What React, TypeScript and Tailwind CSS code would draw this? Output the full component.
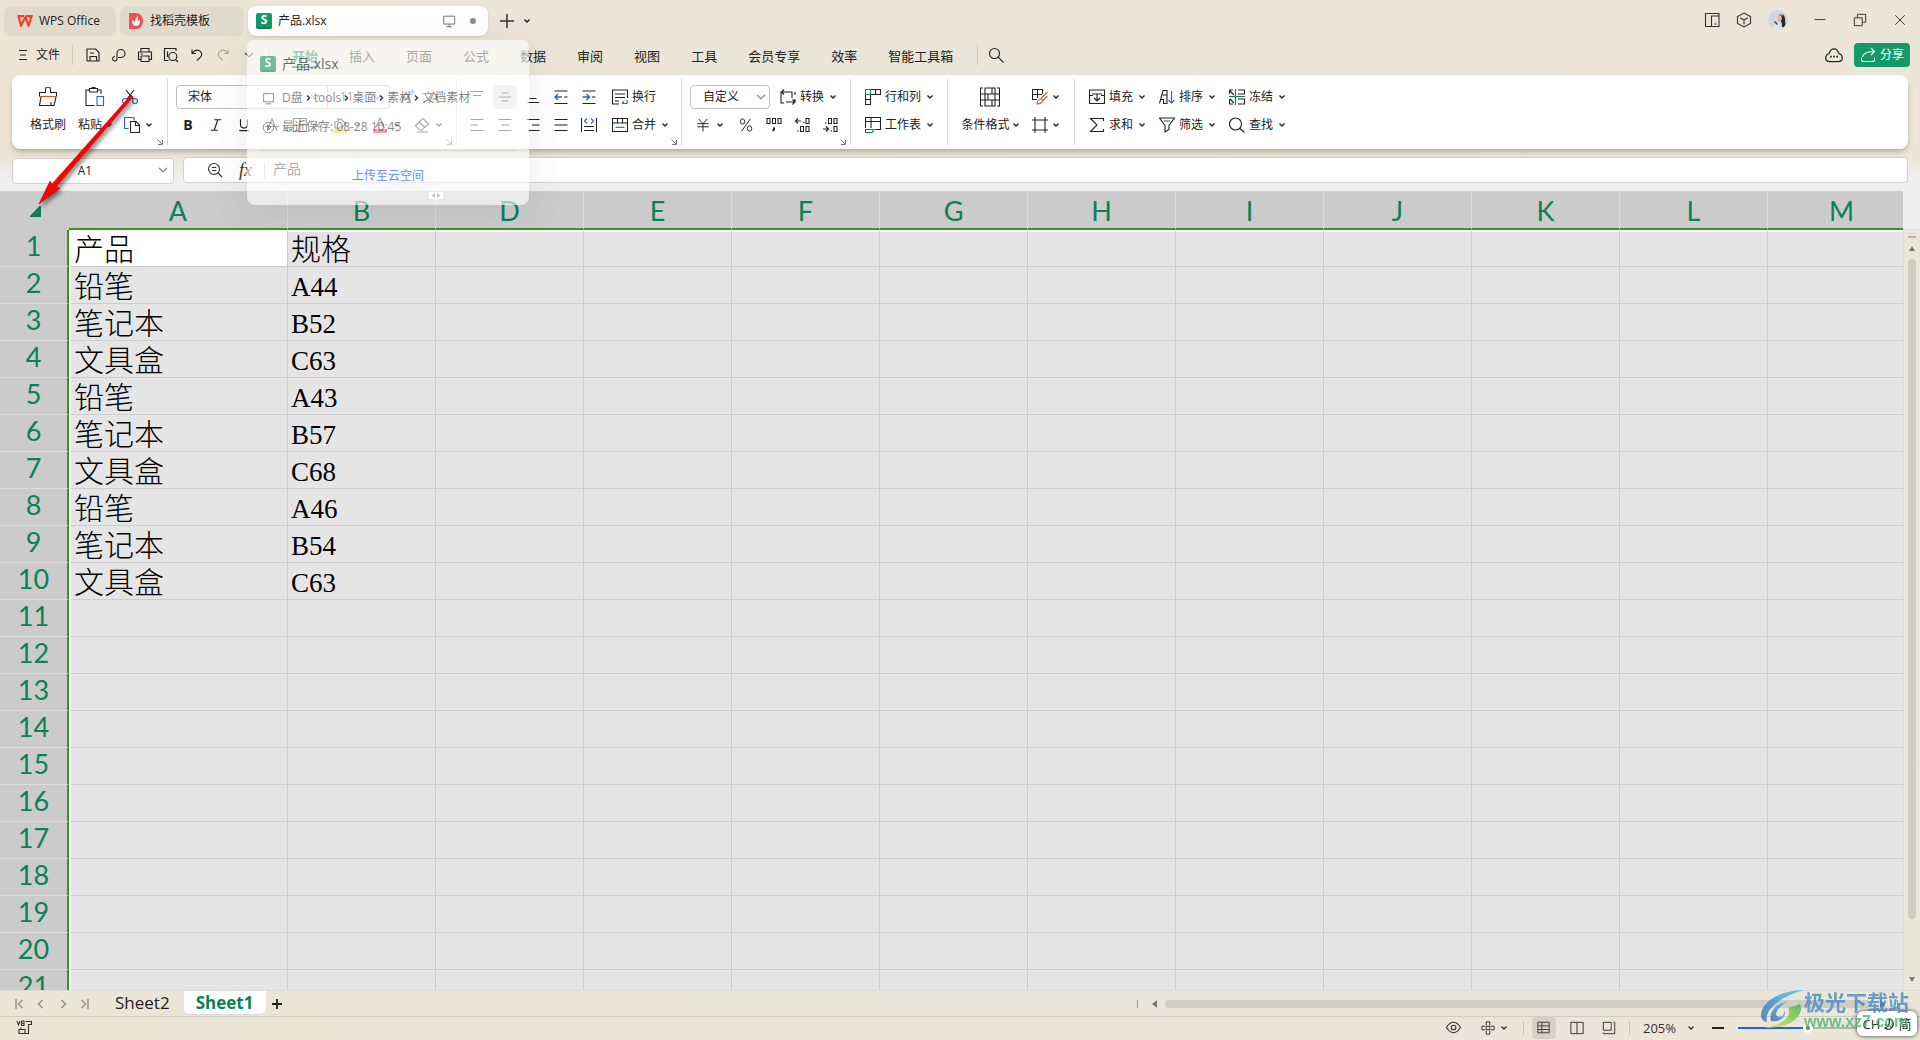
import React from 'react';
import clsx from 'clsx';

type IconProps = {
  children: React.ReactNode;
  className?: string;
};

const GREEN = '#0a8157';
const BLUE = '#2b5fe0';
const ORANGE = '#cf5c2a';

const Icon = ({ children, className = 'w-4 h-4' }: IconProps) => (
  <svg viewBox="0 0 16 16" fill="none" stroke="currentColor" strokeWidth="1.1" className={clsx('shrink-0', className)} aria-hidden="true">
    {children}
  </svg>
);

const Caret = ({ className = '' }: { className?: string }) => (
  <svg viewBox="0 0 6 4" fill="none" stroke="currentColor" strokeWidth="1.4" className={clsx('w-[6px] h-1 shrink-0', className)} aria-hidden="true">
    <path d="M0.5 0.5L3 3L5.500 0.500" />
  </svg>
);

const WideCaret = ({ className = '' }: { className?: string }) => (
  <svg viewBox="0 0 10 6" fill="none" stroke="currentColor" strokeWidth="1.1" className={clsx('w-[10px] h-[6px] shrink-0', className)} aria-hidden="true">
    <path d="M1 0.800L5 4.800L9 0.800" />
  </svg>
);

const SheetLogo = () => (
  <span className="w-4 h-4 rounded-xs bg-[#14996a] border-b-2 border-[#0c7d55] text-white text-xs leading-4 font-bold flex items-center justify-center shrink-0">
    S
  </span>
);

const Launcher = () => (
  <svg viewBox="0 0 6 6" fill="none" stroke="#777" className="absolute right-1 bottom-1 w-[6px] h-[6px]" aria-hidden="true">
    <path d="M0.500 0.500L5 5M5.500 1V5.500H1" />
  </svg>
);

const ToolButton = ({ label, children }: { label: string; children: React.ReactNode }) => (
  <button aria-label={label} className="w-7 h-7 flex items-center justify-center">
    {children}
  </button>
);

const LabelButton = ({ text, caret = true, children }: { text: string; caret?: boolean; children: React.ReactNode }) => (
  <button className="h-7 flex items-center gap-1 whitespace-nowrap">
    {children}
    {text}
    {caret && <Caret className="ml-[2px]" />}
  </button>
);

const Group = ({ width, launcher = false, children }: { width: string; launcher?: boolean; children: React.ReactNode }) => (
  <div className={clsx('relative pt-1 shrink-0', width)}>
    {children}
    {launcher && <Launcher />}
  </div>
);

const quickTools = [
  { label: '保存', icon: <path d="M2 14V2H10.500L14 5.500V14H2M5 14V9.500H11.500V14M5 6H9" /> },
  { label: '链接', icon: <path d="M7 10.500H10A4 4 0 1 0 6 6.500V11.500A2.200 2.200 0 1 1 3.800 9.500" /> },
  { label: '打印', icon: <path d="M4 5V1.500H12V5M4 12.500H1.500V5H14.500V12.500H12M4 9H12V14.500H4V9M3.500 7H5.500" /> },
  { label: '打印预览', icon: <path d="M5.500 13.500H1.500V1.500H13V4M4.500 4.500V10M12.500 12.500L15 15M13.800 9.500A4 4 0 1 1 5.800 9.500A4 4 0 1 1 13.800 9.500" /> },
  { label: '撤销', icon: <path d="M3 2.500V6.500H7M3.300 6.300C5 3.500 8 2.500 10.500 3.800C13 5.200 13.300 8.300 11.500 10.200L8 13.500" /> },
];

const menus = ['开始', '插入', '页面', '公式', '数据', '审阅', '视图', '工具', '会员专享', '效率', '智能工具箱'];

const columns = ['A', 'B', 'D', 'E', 'F', 'G', 'H', 'I', 'J', 'K', 'L', 'M'];

const rows = [
  ['产品', '规格'],
  ['铅笔', 'A44'],
  ['笔记本', 'B52'],
  ['文具盒', 'C63'],
  ['铅笔', 'A43'],
  ['笔记本', 'B57'],
  ['文具盒', 'C68'],
  ['铅笔', 'A46'],
  ['笔记本', 'B54'],
  ['文具盒', 'C63'],
];

const TabBar = () => (
  <div className="h-10 flex items-center text-xs shrink-0">
    <div className="mt-[2px] flex items-center">
      <button className="ml-1 w-28 h-[30px] rounded-lg bg-[#e0dacd] flex items-center gap-[6px] pl-[13px]">
        <svg viewBox="0 0 16 12" className="w-4 h-3" fill="none" stroke="#f0402c" strokeWidth="2.200" aria-hidden="true">
          <path d="M0.500 1.200H7M1.500 1L4 10.500L8.500 2L11.500 10.500L14.500 1.200M9.500 1.200H15.800" />
        </svg>
        WPS Office
      </button>
      <button className="ml-1 w-31 h-[30px] rounded-lg bg-[#e0dacd] flex items-center gap-[7px] pl-[9px]">
        <svg viewBox="0 0 14 16" className="w-[14px] h-4" aria-hidden="true">
          <path d="M0 0H7A7 8 0 0 1 7 16H0Z" fill="#ee5058" />
          <path d="M7 13C3 12 3 9 3.500 7C4.500 7.500 5.500 8.500 6 9.500C6 7 7 4.500 8.500 3C9 5 8.800 7 8.500 9C9 8 10 7 11 6.500C11.500 10 10 12.500 7 13Z" fill="#fff" />
        </svg>
        找稻壳模板
      </button>
      <div className="ml-1 w-60 h-[30px] rounded-lg bg-white shadow-sm flex items-center pl-2 pr-3">
        <SheetLogo />
        <span className="ml-[6px] flex-1">产品.xlsx</span>
        <Icon className="w-[14px] h-[14px] text-gray-500 mr-[14px]">
          <path d="M2 2.500H14.500V11.500H2ZM5 14.500H11.500M8.200 11.500V14.500" />
        </Icon>
        <span className="w-[6px] h-[6px] rounded-full bg-[#8d8d8d]" />
      </div>
      <button aria-label="新建" className="ml-3">
        <svg viewBox="0 0 14 14" className="w-[14px] h-[14px]" stroke="#333" strokeWidth="1.500" aria-hidden="true">
          <path d="M7 0V14M0 7H14" />
        </svg>
      </button>
      <button aria-label="标签列表" className="ml-[10px]">
        <Caret />
      </button>
    </div>
    <div className="ml-auto flex items-center text-[#333]">
      <button aria-label="分屏" className="w-8 flex justify-center">
        <Icon>
          <path d="M15 4V1.500H1.500V14.500H5.500M15 4H7.500V14.500H15ZM7.500 14.500H5.500M10.500 12H12.500" />
        </Icon>
      </button>
      <button aria-label="应用" className="w-8 flex justify-center">
        <Icon>
          <path d="M8 1L14.500 4.500V11.500L8 15L1.500 11.500V4.500ZM4 5.800L8 8L12 5.800M8 8V12.500" />
        </Icon>
      </button>
      <button aria-label="账号" className="w-9 flex justify-center">
        <svg viewBox="0 0 20 20" className="w-5 h-5" aria-hidden="true">
          <circle cx="10" cy="10" r="10" fill="#cbd8e2" />
          <path d="M5 19C5 14 8 12 11 12L14 19C11 20.500 8 20.500 5 19Z" fill="#dbe8f0" />
          <path d="M11 5C14 3 17 5 17 9C17 13 18.500 14 16 17L14 17C14 13 13.500 11 11.500 9Z" fill="#2d2730" />
          <path d="M10 6C12 4.500 14 6 14 8C13.500 10.500 12 12 10.500 12C9 10.500 9 8 10 6Z" fill="#e3b9a8" />
          <path d="M7 11L10 14L9 15L6 12Z" fill="#4b3d3f" />
          <path d="M11 5L15 4L14 6Z" fill="#dfae4c" />
        </svg>
      </button>
      <button aria-label="最小化" className="w-10 ml-1 flex justify-center">
        <Icon className="w-[14px] h-[14px]">
          <path d="M2 7.500H14" />
        </Icon>
      </button>
      <button aria-label="还原" className="w-10 flex justify-center">
        <Icon className="w-[14px] h-[14px]">
          <path d="M1.500 5.500H10.500V14.500H1.500ZM5 5.500V1.500H14.500V10.500H10.500" />
        </Icon>
      </button>
      <button aria-label="关闭" className="w-10 flex justify-center">
        <Icon className="w-[14px] h-[14px]">
          <path d="M2.500 2.500L13.500 13.500M13.500 2.500L2.500 13.500" />
        </Icon>
      </button>
    </div>
  </div>
);

const MenuBar = () => (
  <nav className="h-[30px] flex items-center text-xs shrink-0 text-[#222]">
    <button className="ml-[18px] flex items-center gap-2">
      <svg viewBox="0 0 10 12" className="w-[10px] h-3" stroke="currentColor" aria-hidden="true">
        <path d="M1 1.500H9M2 6H8M1 10.500H9" />
      </svg>
      文件
    </button>
    <span className="ml-3 mr-[7px] w-px h-5 bg-[#ccc6b8]" />
    {quickTools.map((tool) => (
      <button key={tool.label} aria-label={tool.label} className="w-[26px] flex justify-center">
        <Icon>{tool.icon}</Icon>
      </button>
    ))}
    <button aria-label="恢复" className="w-[26px] flex justify-center text-[#aaa59b]">
      <Icon>
        <path d="M13 2.500V6.500H9M12.700 6.300C11 3.500 8 2.500 5.500 3.800C3 5.200 2.700 8.300 4.500 10.200L8 13.500" />
      </Icon>
    </button>
    <button aria-label="更多" className="w-[26px] flex justify-center">
      <WideCaret />
    </button>
    <span className="ml-[7px] mr-[22px] w-px h-5 bg-[#ccc6b8]" />
    <div className="flex gap-[31px] text-[13px] leading-5">
      {menus.map((menu, i) => (
        <button key={menu} className={clsx('whitespace-nowrap pt-1 border-b-2', i === 0 ? 'font-bold text-[#0a8157] border-[#0a8157]' : 'border-transparent')}>
          {menu}
        </button>
      ))}
    </div>
    <span className="ml-6 mr-[10px] w-px h-5 bg-[#ccc6b8]" />
    <button aria-label="搜索">
      <Icon>
        <path d="M11.500 6.500A5 5 0 1 1 1.500 6.500A5 5 0 1 1 11.500 6.500M10.200 10.200L15.500 15.500" />
      </Icon>
    </button>
    <button aria-label="云文档" className="ml-auto mr-[11px]">
      <Icon className="w-[18px] h-[18px]">
        <path d="M4 13.800C0.800 13.800 0.500 11.800 0.700 9.800C1 8 2 7.200 3.500 6.800C4.500 4 6 2.500 8 2.500S11.500 4 12.500 6.800C14 7.200 15 8 15.300 9.800C15.500 11.800 15.200 13.800 12 13.800Z" />
        <path d="M4.500 9.500H6M7.300 9.500H8.800M10.100 9.500H11.600" strokeWidth="1.600" />
      </Icon>
    </button>
    <button className="mr-[10px] w-14 h-6 rounded bg-[#14996a] text-white flex items-center justify-center gap-1">
      <Icon>
        <path d="M1.500 10.500V12.500Q1.500 14.500 3.500 14.500H12.500Q14.500 14.500 14.500 12.500V10.500M2.500 10C3.500 6 7 4.500 14 4.500M11 1L14.500 4.500L11 8" />
      </Icon>
      分享
    </button>
  </nav>
);

const Divider = () => <span className="w-px my-1 bg-[#d6d6d6] shrink-0" />;

const Ribbon = () => (
  <div className="mx-3 mt-[5px] h-[74px] rounded-lg bg-white shadow-md shadow-[#00000030] flex text-xs shrink-0 text-[#222]">
    <Group width="w-[155px]" launcher>
      <div className="flex pt-1">
        <button className="ml-[18px] w-9 h-14 flex flex-col items-center">
          <svg viewBox="0 0 20 20" className="w-5 h-5 mt-1" fill="none" stroke="currentColor" strokeWidth="1.100" aria-hidden="true">
            <path d="M1.500 9.500V5.500H7.500V2.500A2 2 0 0 1 12.500 2.500V5.500H18.500V9.500M3 10L1.500 18.500H16L18 10M13 18V15" />
            <path d="M1.500 9.500H18.500" stroke={ORANGE} />
          </svg>
          <span className="mt-2 leading-5">格式刷</span>
        </button>
        <button className="ml-3 w-[34px] h-14 flex flex-col items-center">
          <svg viewBox="0 0 20 20" className="w-5 h-5 mt-1" fill="none" stroke="currentColor" strokeWidth="1.100" aria-hidden="true">
            <path d="M9.500 18.500H1V3H4M13 3H16V7M4.500 1.500H12.500V5H4.500ZM7 1.500V0.500H10V1.500" />
            <path d="M12 9.500H18.500V18.500H12Z" stroke={BLUE} />
          </svg>
          <span className="mt-2 leading-5 flex items-center gap-1">
            粘贴
            <Caret />
          </span>
        </button>
        <div className="ml-1">
          <ToolButton label="剪切">
            <Icon>
              <path d="M4 1L11 10M12 1L5 10" />
              <circle cx="3" cy="12" r="2.500" stroke={BLUE} />
              <circle cx="13" cy="12" r="2.500" stroke={BLUE} />
            </Icon>
          </ToolButton>
          <button aria-label="复制" className="h-7 flex items-center gap-[6px] pl-2">
            <Icon>
              <path d="M4.500 11.500H0.500V0.500H10V3.500" stroke={BLUE} />
              <path d="M6.500 4.500H12L15.500 8V15.500H6.500ZM11.500 4.500V8.500H15.500" />
            </Icon>
            <Caret />
          </button>
        </div>
      </div>
    </Group>
    <Divider />
    <Group width="w-[288px]" launcher>
      <div className="h-7 mt-1 ml-2 flex items-center">
        <div className="relative">
          <select aria-label="字体" className="appearance-none w-[152px] h-6 pl-[11px] border border-[#bfbfbf] rounded-l">
            <option>宋体</option>
          </select>
          <WideCaret className="absolute right-2 top-[9px] text-gray-500" />
        </div>
        <div className="relative">
          <select aria-label="字号" className="appearance-none w-[62px] h-6 pl-3 border border-l-0 border-[#bfbfbf] rounded-r">
            <option>11</option>
          </select>
          <WideCaret className="absolute right-2 top-[9px] text-gray-500" />
        </div>
        <span className="w-1" />
        <ToolButton label="增大字号">
          <Icon>
            <path d="M1 14L6 3L11 14M3 10H9" />
            <path d="M10 3H15M12.500 0.500V5.500" stroke={BLUE} />
          </Icon>
        </ToolButton>
        <ToolButton label="减小字号">
          <Icon>
            <path d="M1 14L6 3L11 14M3 10H9" />
            <path d="M10 3H15" stroke={BLUE} />
          </Icon>
        </ToolButton>
      </div>
      <div className="h-7 ml-[6px] flex items-center">
        <ToolButton label="加粗">
          <span className="font-bold text-sm">B</span>
        </ToolButton>
        <ToolButton label="倾斜">
          <Icon className="w-[14px] h-[14px]">
            <path d="M6 2H14M2 14H10M10 2L6 14" strokeWidth="1.300" />
          </Icon>
        </ToolButton>
        <ToolButton label="下划线">
          <Icon className="w-[14px] h-[14px]">
            <path d="M4 1.500V7.500A4 4 0 0 0 12 7.500V1.500M2.500 14.500H13.500" strokeWidth="1.300" />
          </Icon>
        </ToolButton>
        <ToolButton label="删除线">
          <Icon>
            <path d="M3 14L8 2L13 14M1 9.500H15" />
          </Icon>
        </ToolButton>
        <button aria-label="边框" className="w-10 h-7 pl-[6px] flex items-center gap-[6px]">
          <Icon>
            <path d="M1.500 1.500H14.500V14.500H1.500ZM8 1.500V14.500M1.500 8H14.500" />
          </Icon>
          <Caret />
        </button>
        <button aria-label="填充颜色" className="w-10 h-7 pl-[6px] flex items-center gap-[6px]">
          <Icon>
            <path d="M3 5L9 2L14 7L8 11H3ZM6 1V5" />
            <path d="M1 14H15" stroke="#e6e000" strokeWidth="4" />
          </Icon>
          <Caret />
        </button>
        <button aria-label="字体颜色" className="w-10 h-7 pl-[6px] flex items-center gap-[6px]">
          <Icon>
            <path d="M3.500 11L8 1L12.500 11M5 8H11" />
            <path d="M1 14H15" stroke="#e81123" strokeWidth="4" />
          </Icon>
          <Caret />
        </button>
        <button aria-label="清除" className="w-10 h-7 pl-2 flex items-center gap-[6px]">
          <Icon>
            <path d="M1.500 8.500L9 1.500L14.500 7L8 13H5.500ZM5 5L11 10.500M3 15H14" />
          </Icon>
          <Caret />
        </button>
      </div>
    </Group>
    <Divider />
    <Group width="w-[224px]" launcher>
      <div className="h-7 mt-1 ml-[6px] flex items-center">
        <ToolButton label="顶端对齐">
          <Icon>
            <path d="M1.500 2.500H14.500M4 6.500H12" />
          </Icon>
        </ToolButton>
        <button aria-label="垂直居中" className="w-6 h-6 mx-[2px] rounded bg-[#e2e2e2] flex items-center justify-center">
          <Icon className="w-[14px] h-[14px]">
            <path d="M4 3.500H12M1 8H15M4 12.500H12" />
          </Icon>
        </button>
        <ToolButton label="底端对齐">
          <Icon>
            <path d="M4.500 9.500H11.500M2.500 13.500H14" />
          </Icon>
        </ToolButton>
        <ToolButton label="减少缩进">
          <Icon>
            <path d="M1.500 2H14.500M1.500 14.500H14.500M11 8H14.500" />
            <path d="M9 8H2M5 5L2 8L5 11" stroke={BLUE} strokeWidth="1.400" />
          </Icon>
        </ToolButton>
        <ToolButton label="增加缩进">
          <Icon>
            <path d="M1.500 2H14.500M1.500 14.500H14.500M11 8H14.500" />
            <path d="M1.500 8H8.500M5.500 5L8.500 8L5.500 11" stroke={BLUE} strokeWidth="1.400" />
          </Icon>
        </ToolButton>
        <span className="w-[9px]" />
        <LabelButton text="换行" caret={false}>
          <Icon>
            <path d="M7 15H0.500V1H15.500V9M3 5H13M3 8.500H13M3 12H7" />
            <path d="M15 11V14.500H10M12 12.500L10 14.500" stroke={GREEN} />
          </Icon>
        </LabelButton>
      </div>
      <div className="h-7 ml-[6px] flex items-center">
        <ToolButton label="左对齐">
          <Icon>
            <path d="M1.500 2.500H14.500M1.500 8H9M1.500 13.500H14.500" />
          </Icon>
        </ToolButton>
        <ToolButton label="居中">
          <Icon>
            <path d="M1.500 2.500H14.500M4 8H12M1.500 13.500H14.500" />
          </Icon>
        </ToolButton>
        <ToolButton label="右对齐">
          <Icon>
            <path d="M1.500 2.500H14.500M7 8H14.500M3.500 13.500H14.500" />
          </Icon>
        </ToolButton>
        <ToolButton label="两端对齐">
          <Icon>
            <path d="M1.500 2.500H14.500M1.500 8H14.500M1.500 13.500H14.500" />
          </Icon>
        </ToolButton>
        <ToolButton label="分散对齐">
          <Icon>
            <path d="M0.500 1V15M15.500 1V15M3 9.500H13M3 13.500H13" />
            <path d="M6 1.500L3.500 4L6 6.500M10 1.500L12.500 4L10 6.500" stroke={BLUE} />
          </Icon>
        </ToolButton>
        <span className="w-[9px]" />
        <LabelButton text="合并">
          <Icon>
            <path d="M0.500 1.500H15.500V14.500H0.500ZM0.500 6H15.500M5.500 1.500V6M10.500 1.500V6" />
            <path d="M3.500 10.300H12.500" stroke={GREEN} />
          </Icon>
        </LabelButton>
      </div>
    </Group>
    <Divider />
    <Group width="w-[168px]" launcher>
      <div className="h-7 mt-1 ml-2 flex items-center">
        <div className="relative mr-[10px]">
          <select aria-label="数字格式" className="appearance-none w-20 h-6 pl-3 border border-[#bfbfbf] rounded">
            <option>自定义</option>
          </select>
          <WideCaret className="absolute right-1 top-[9px] text-gray-500" />
        </div>
        <LabelButton text="转换">
          <Icon>
            <path d="M4 14H1V3H12V9M4 0.500L1.500 3L4 5.500M15 3V6M15 10V13H6M12.500 10.500L15 13L12.500 15.500" />
          </Icon>
        </LabelButton>
      </div>
      <div className="h-7 ml-2 flex items-center">
        <button aria-label="货币" className="w-[42px] h-7 flex items-center gap-[7px] pl-[6px]">
          <Icon className="w-[14px] h-[14px]">
            <path d="M3 1L8 6.500L13 1M1.500 6.500H14.500M1.500 10H14.500M8 6.500V15.500" />
          </Icon>
          <Caret />
        </button>
        <ToolButton label="百分比">
          <Icon className="w-[14px] h-[14px]">
            <path d="M13 1L3 15" />
            <ellipse cx="4" cy="4" rx="2.500" ry="3" />
            <ellipse cx="12" cy="12" rx="2.500" ry="3" />
          </Icon>
        </ToolButton>
        <ToolButton label="千位分隔">
          <Icon>
            <path d="M1 1.500H4V6.500H1ZM6.500 1.500H9.500V6.500H6.500ZM12 1.500H15V6.500H12Z" />
            <path d="M8 10.500V12L7 14" strokeWidth="2" />
          </Icon>
        </ToolButton>
        <ToolButton label="增加小数">
          <Icon>
            <path d="M7 4H1.500M4 1.500L1.500 4L4 6.500M12 1.500H15V6.500H12ZM6.500 9.500H9.500V14.500H6.500ZM12 9.500H15V14.500H12Z" />
            <path d="M9 5.500H10.500M3 14H4.500" />
          </Icon>
        </ToolButton>
        <ToolButton label="减少小数">
          <Icon>
            <path d="M1 12H6.500M4 9.500L6.500 12L4 14.500M6.500 1.500H9.500V6.500H6.500ZM12 1.500H15V6.500H12ZM12 9.500H15V14.500H12Z" />
            <path d="M3 6H4.500M8.500 14H10" />
          </Icon>
        </ToolButton>
      </div>
    </Group>
    <Divider />
    <Group width="w-24">
      <div className="mt-1 ml-[14px]">
        <LabelButton text="行和列">
          <Icon>
            <path d="M0.500 6V15.500H5.500V6M0.500 10.500H5.500M6 0.500H15.500V5.500H6M10.500 0.500V5.500" />
            <path d="M0.500 0.500H5.500V5.500H0.500Z" stroke={GREEN} />
          </Icon>
        </LabelButton>
        <LabelButton text="工作表">
          <Icon>
            <path d="M0.500 11V0.500H15.500V12.500H10M0.500 4.500H15.500M6 0.500V11" />
            <path d="M0.500 12.500H9L7 15.500H0.500Z" stroke={GREEN} />
          </Icon>
        </LabelButton>
      </div>
    </Group>
    <Divider />
    <Group width="w-[126px]">
      <div className="flex pt-1">
        <button className="ml-[13px] w-[58px] h-14 flex flex-col items-center whitespace-nowrap">
          <svg viewBox="0 0 20 20" className="w-5 h-5 mt-1" fill="none" stroke="currentColor" strokeWidth="1.100" aria-hidden="true">
            <path d="M3 1H0.500V19H3M17 1H19.500V19H17M5 1H15V19H5ZM5 7H19M0.500 7H5M0.500 13H19M8 7V13M12 1V7M12 13V19" />
          </svg>
          <span className="mt-2 leading-5 flex items-center gap-[3px]">
            条件格式
            <Caret />
          </span>
        </button>
        <div className="ml-[13px]">
          <button aria-label="表格样式" className="h-7 flex items-center gap-[5px]">
            <Icon>
              <path d="M5 10.500H0.500V0.500H10.500V5M0.500 5.500H10M5.500 0.500V9" />
              <path d="M15.500 3L9 9.500M15.500 7L11 11.500M5 15C5 11 8 9 10 10.500C12 12.500 9 15 5 15Z" stroke={ORANGE} />
            </Icon>
            <Caret />
          </button>
          <button aria-label="单元格样式" className="h-7 flex items-center gap-[5px]">
            <Icon>
              <path d="M0 3H16M0 13H16M3 0V16M13 0V16" />
            </Icon>
            <Caret />
          </button>
        </div>
      </div>
    </Group>
    <Divider />
    <Group width="w-[230px]">
      <div className="mt-1 ml-[14px] grid grid-cols-[70px_70px_70px]">
        <LabelButton text="填充">
          <Icon>
            <path d="M4 6.500H0.500V1H15.500V6.500H12M0.500 6.500V14.500H15.500V6.500M3 5H13M8 5V12M5 9L8 12L11 9" />
          </Icon>
        </LabelButton>
        <LabelButton text="排序">
          <Icon>
            <path d="M0.500 14.500L4 1.500H8V14.500H4.500V10.500H1.500M3.500 6H8" />
            <path d="M12.500 2V14M9.500 11L12.500 14L15.500 11" stroke={BLUE} />
          </Icon>
        </LabelButton>
        <LabelButton text="冻结">
          <Icon>
            <path d="M0.500 5V1H4M0.500 10V15H4M9 1H15.500V5H9M9 10H15.500V15H9M1 2L5 6M1 10L5 14" />
            <path d="M0 7.500H16M6.500 0V16" stroke={GREEN} />
          </Icon>
        </LabelButton>
        <LabelButton text="求和">
          <Icon>
            <path d="M14.500 4V1.500H1.500L8 8L1.500 14.500H14.500V12" />
          </Icon>
        </LabelButton>
        <LabelButton text="筛选">
          <Icon>
            <path d="M0.500 1H15.500L10 8.500V12.500L6 15V8.500Z" />
            <path d="M5 4H11" stroke={GREEN} />
          </Icon>
        </LabelButton>
        <LabelButton text="查找">
          <Icon>
            <path d="M12.500 7A6 6 0 1 1 0.500 7A6 6 0 1 1 12.500 7M11 11.500L15.500 15.500" />
          </Icon>
        </LabelButton>
      </div>
    </Group>
  </div>
);

const FormulaBar = () => (
  <div className="h-[42px] pt-2 px-3 flex items-start gap-[9px] shrink-0 bg-linear-to-b from-transparent from-20% to-[#efefef] to-70%">
    <div className="relative">
      <input aria-label="名称框" defaultValue="A1" className="w-[162px] h-[26px] pr-4 rounded bg-white border border-[#d3d0c8] text-center text-xs text-[#222]" />
      <WideCaret className="absolute right-[6px] top-[10px] text-gray-500" />
    </div>
    <div className="flex-1 h-[26px] rounded bg-white border border-[#d3d0c8] flex items-center text-[#333]">
      <button aria-label="查看" className="ml-[23px]">
        <Icon>
          <path d="M12.500 7A5.500 5.500 0 1 1 1.500 7A5.500 5.500 0 1 1 12.500 7M11 11L15 15M5 5.500H9M5 8.500H9" />
        </Icon>
      </button>
      <button aria-label="插入函数" className="ml-4 font-['Liberation_Serif',serif] italic text-lg leading-5">
        fx
      </button>
      <span className="ml-3 w-px h-4 bg-[#ccc]" />
      <input aria-label="编辑栏" defaultValue="产品" className="ml-2 h-6 pb-1 flex-1 text-sm outline-none" />
    </div>
  </div>
);

const Grid = () => (
  <div className="flex-1 min-h-0 flex">
    <div className="flex-1 min-w-0 overflow-hidden bg-[#e5e5e5]">
      <table className="table-fixed w-0 border-separate border-spacing-0">
        <colgroup>
          <col className="w-[69px]" />
          <col className="w-[219px]" />
          {columns.slice(1).map((col) => (
            <col key={col} className="w-[148px]" />
          ))}
        </colgroup>
        <thead>
          <tr className="h-[39px] bg-[#cbcbcb] font-['Lato',sans-serif] text-[27px] leading-8 text-[#0a8157]">
            <th className="p-0 align-bottom">
              <button aria-label="全选" className="block ml-[30px] mb-[13px]">
                <svg viewBox="0 0 11 11" className="w-[11px] h-[11px]" aria-hidden="true">
                  <path d="M0 11V10L9.500 0H11V11Z" fill={GREEN} />
                </svg>
              </button>
            </th>
            {columns.map((col) => (
              <th key={col} className="relative p-0 pt-[2px] font-normal border-b-2 border-[#428f1f] border-r border-r-[#dcdcdc]">
                {col}
                {col === 'B' && (
                  <span className="absolute -right-2 top-[1px] w-[14px] h-[7px] bg-white flex items-center justify-center">
                    <svg viewBox="0 0 10 5" className="w-[10px] h-[5px]" fill="#666a85" aria-hidden="true">
                      <path d="M4 0V5L0.500 2.500ZM6 0V5L9.500 2.500Z" />
                    </svg>
                  </span>
                )}
              </th>
            ))}
          </tr>
        </thead>
        <tbody>
          {Array.from({ length: 21 }, (_, r) => (
            <tr key={r} className="h-[37px]">
              <th className="p-0 bg-[#cbcbcb] border-r-2 border-r-[#428f1f] border-b border-b-[#dcdcdc] font-['Lato',sans-serif] font-normal text-[27px] leading-8 text-[#0a8157]">
                <div className="h-9">{r + 1}</div>
              </th>
              {columns.map((col, c) => (
                <td
                  key={col}
                  className={clsx(
                    "p-0 pl-[3px] border-r border-b border-r-[#cdcdcd] border-b-[#cdcdcd] font-['Liberation_Serif','Noto_Sans_CJK_SC',serif] text-black whitespace-nowrap font-light",
                    c === 1 && r > 0 ? 'text-[27px] leading-9' : 'text-[30px] leading-9',
                    c === 0 && 'border-l-2 border-l-white',
                    r === 0 && 'border-t-2 border-t-white',
                    r === 0 && c === 0 && 'bg-white',
                  )}
                >
                  <div className={clsx(r === 0 ? 'h-[34px]' : 'h-9 pt-[2px]')}>{rows[r]?.[c]}</div>
                </td>
              ))}
            </tr>
          ))}
        </tbody>
      </table>
    </div>
    <div className="w-[17px] flex flex-col shrink-0">
      <div className="h-[38px] bg-[#efeff0]" />
      <div className="flex-1 flex flex-col items-center border-t border-l border-[#e0ddd4] text-[#777]">
        <span className="mt-[6px] w-2 h-[2px] bg-[#b7b3a8]" />
        <svg viewBox="0 0 6 5" className="mt-2 w-[6px] h-[5px]" fill="currentColor" aria-hidden="true">
          <path d="M3 0L6 5H0Z" />
        </svg>
        <span className="mt-2 w-2 h-[660px] rounded-full bg-[#cfccc1]" />
        <svg viewBox="0 0 6 5" className="mt-auto mb-2 w-[6px] h-[5px]" fill="currentColor" aria-hidden="true">
          <path d="M3 5L6 0H0Z" />
        </svg>
      </div>
    </div>
  </div>
);

const SheetBar = () => (
  <div className="h-[27px] flex items-center border-t border-b border-t-[#dcdcdc] border-b-[#d0ccbf] shrink-0">
    <div className="ml-[14px] w-19 flex justify-between text-[#9b9a92]">
      {[
        { label: '第一张', d: 'M2 1V11M8.500 2L4.500 6L8.500 10' },
        { label: '上一张', d: 'M7.500 2L3.500 6L7.500 10' },
        { label: '下一张', d: 'M4.500 2L8.500 6L4.500 10' },
        { label: '最后一张', d: 'M10 1V11M3.500 2L7.500 6L3.500 10' },
      ].map((nav) => (
        <button key={nav.label} aria-label={nav.label}>
          <svg viewBox="0 0 12 12" className="w-3 h-3" fill="none" stroke="currentColor" strokeWidth="1.600" aria-hidden="true">
            <path d={nav.d} />
          </svg>
        </button>
      ))}
    </div>
    <button className="ml-[25px] self-start text-[17px] leading-6 text-[#222]">Sheet2</button>
    <button className="ml-[14px] w-[82px] h-6 self-start rounded-b-md bg-white border-b border-[#d8d8d8] text-[17px] leading-6 font-bold text-[#0a8157]">Sheet1</button>
    <button aria-label="新建工作表" className="ml-[6px]">
      <svg viewBox="0 0 10 10" className="w-[10px] h-[10px]" stroke="#222" strokeWidth="1.800" aria-hidden="true">
        <path d="M5 0V10M0 5H10" />
      </svg>
    </button>
    <div className="ml-auto w-[783px] flex items-center text-[#777]">
      <span className="w-px h-2 bg-[#999]" />
      <svg viewBox="0 0 5 8" className="ml-[14px] w-[5px] h-2" fill="currentColor" aria-hidden="true">
        <path d="M5 0V8L0 4Z" />
      </svg>
      <span className="ml-2 w-[705px] h-2 rounded-full bg-[#cfccc1]" />
      <svg viewBox="0 0 5 8" className="ml-[10px] w-[5px] h-2" fill="currentColor" aria-hidden="true">
        <path d="M0 0V8L5 4Z" />
      </svg>
      <span className="ml-3 w-px h-2 bg-[#999]" />
    </div>
  </div>
);

const StatusBar = () => (
  <div className="h-[23px] pb-[2px] flex items-center text-xs text-[#333] shrink-0">
    <button aria-label="宏" className="ml-4">
      <Icon>
        <path d="M1 1L2.500 5L4 1M5.500 1V5.500H8V1H5.500M5.500 3.200H8M9.500 1.500H15.500V4.500H12.500V13.500H3V9.500H9V13M5 9V7.500" />
      </Icon>
    </button>
    <div className="ml-auto flex items-center">
      <button aria-label="护眼模式" className="mr-5">
        <Icon className="w-[15px] h-[15px]">
          <path d="M0.500 8C3 4 5.500 2.500 8 2.500S13 4 15.500 8C13 12 10.500 13.500 8 13.500S3 12 0.500 8Z" />
          <circle cx="8" cy="8" r="2.500" />
        </Icon>
      </button>
      <button aria-label="阅读模式" className="mr-4 flex items-center gap-[6px]">
        <Icon className="w-[14px] h-[14px]">
          <path d="M6 5V1H10V5M6 11V15H10V11M5 6H1V10H5M11 6H15V10H11M6 6H10V10H6Z" />
        </Icon>
        <Caret />
      </button>
      <span className="mr-2 w-px h-[14px] bg-[#c8c4b8]" />
      <button aria-label="普通视图" className="w-6 h-[22px] rounded bg-[#d7d0c4] flex items-center justify-center">
        <Icon className="w-[13px] h-[13px]">
          <path d="M1 1.500H15V14.500H1ZM1 6H15M1 10.500H15M6 1.500V14.500" />
        </Icon>
      </button>
      <button aria-label="分页预览" className="ml-[14px]">
        <Icon className="w-[14px] h-[14px]">
          <path d="M1 1.500H15V14.500H1ZM8 1.500V14.500" />
        </Icon>
      </button>
      <button aria-label="页面布局" className="ml-[18px]">
        <Icon className="w-[14px] h-[14px]">
          <path d="M1.500 1.500H10.500V10.500H1.500ZM13 1.500H14.500V14.500H1.500V13" />
        </Icon>
      </button>
      <span className="mx-[13px] w-px h-[14px] bg-[#c8c4b8]" />
      <button className="flex items-center gap-3 text-[13px] leading-5">
        205%
        <Caret />
      </button>
      <button aria-label="缩小" className="ml-[18px] w-3 h-[2px] bg-[#222]" />
      <label className="ml-[14px] mr-[42px] flex items-center">
        <span className="sr-only">缩放</span>
        <input
          type="range"
          min="10"
          max="400"
          defaultValue="205"
          className="appearance-none w-[140px] h-[2px] bg-linear-to-r from-[#2b5fe0] from-50% to-[#b5b1a8] to-50% [&::-webkit-slider-thumb]:appearance-none [&::-webkit-slider-thumb]:w-[10px] [&::-webkit-slider-thumb]:h-[10px] [&::-webkit-slider-thumb]:rounded-full [&::-webkit-slider-thumb]:bg-[#777] [&::-webkit-slider-thumb]:border-[3px] [&::-webkit-slider-thumb]:border-white"
        />
      </label>
    </div>
  </div>
);

const FilePopup = () => (
  <div className="absolute left-[247px] top-10 w-[282px] h-[165px] rounded-lg bg-white/60 shadow-[0_8px_40px_rgba(0,0,0,0.08)] px-[13px] pt-[14px] text-xs text-[#444]/80">
    <div className="h-5 flex items-center gap-[6px] text-sm">
      <span className="opacity-60">
        <SheetLogo />
      </span>
      产品.xlsx
    </div>
    <div className="mt-[15px] h-[18px] flex items-center text-[#333]/60 whitespace-nowrap">
      <Icon className="w-[13px] h-[13px] ml-[2px] mr-[7px]">
        <path d="M2 2H14V12H2ZM4.500 14.500H11.500" />
      </Icon>
      {['D盘', 'tools', '桌面', '素材', '文档素材'].map((part, i) => (
        <React.Fragment key={part}>
          {i > 0 && (
            <svg viewBox="0 0 5 6" className="w-[5px] h-[6px] mx-[3px]" fill="none" stroke="#333" strokeWidth="1.400" aria-hidden="true">
              <path d="M1 0.500L3.500 3L1 5.500" />
            </svg>
          )}
          {part}
        </React.Fragment>
      ))}
    </div>
    <div className="mt-[11px] h-[18px] flex items-center text-[#333]/60 whitespace-nowrap">
      <Icon className="w-[13px] h-[13px] ml-[2px] mr-[7px]">
        <circle cx="8" cy="8" r="6.500" />
        <path d="M7 5L11 8L7 11Z" />
      </Icon>
      最近保存: 08-28 10:45
    </div>
    <div className="mt-[14px] border-t border-black/5 pt-[15px] text-center">
      <a href="#upload" className="text-[#6a8df0] leading-5">上传至云空间</a>
    </div>
  </div>
);

const App = () => {
  return (
    <div className="relative h-screen flex flex-col overflow-hidden bg-linear-to-r from-[#ece5d5] via-[#e9e5d8] to-[#ece6d8] font-['Open_Sans','Noto_Sans_CJK_SC',sans-serif] text-[#222]">
      <TabBar />
      <MenuBar />
      <Ribbon />
      <FormulaBar />
      <Grid />
      <SheetBar />
      <StatusBar />

      <FilePopup />

      {/* Pointer to the select-all corner */}
      <svg viewBox="0 0 120 130" className="absolute left-[30px] top-[86px] w-[120px] h-[130px] pointer-events-none drop-shadow-[2px_3px_2px_rgba(0,0,0,0.5)]" aria-hidden="true">
        <path d="M101 9L103 11L26 101L30 102L9 118L20 95L22 98Z" fill="#f00" stroke="#a00000" strokeWidth="0.500" />
        <path d="M102 10L24 100" stroke="#f00" strokeWidth="3" />
      </svg>

      {/* Input method bubble */}
      <div className="absolute right-[3px] bottom-1 w-[60px] h-[25px] rounded-md bg-white shadow-[0_0_4px_#333] text-[13px] leading-6 flex items-center justify-center gap-1 whitespace-nowrap">
        CH
        <svg viewBox="0 0 10 12" className="w-[10px] h-3" fill="none" stroke="#222" strokeWidth="1.200" aria-hidden="true">
          <path d="M5 1C10 2 11 8 6 11C4 11.500 2 11 1 10C5 9 6 5 5 1ZM1 6.500L2.500 8" />
        </svg>
        简
      </div>

      {/* Watermark */}
      <div className="absolute right-[10px] bottom-[10px] flex items-center opacity-75 pointer-events-none">
        <svg viewBox="0 0 44 40" className="w-11 h-10" aria-hidden="true">
          <defs>
            <linearGradient id="swirlBlue" x1="0" y1="1" x2="1" y2="0">
              <stop offset="0" stopColor="#2c63b4" />
              <stop offset="1" stopColor="#3cc3ec" />
            </linearGradient>
            <linearGradient id="swirlGreen" x1="0" y1="1" x2="1" y2="0">
              <stop offset="0" stopColor="#e6e63c" />
              <stop offset="1" stopColor="#2fae4a" />
            </linearGradient>
          </defs>
          <path d="M44 0C20 0 1 12 1 25C1 29 3 31 7 32C4 22 16 8 44 0Z" fill="url(#swirlBlue)" />
          <path d="M11 31C8 22 17 13 29 11C21 15 16 20 16 25C20 29 25 26 24 20C28 25 20 33 11 31Z" fill="url(#swirlBlue)" />
          <path d="M40 14C45 24 32 39 4 38C22 35 33 27 28 17C32 17 36 16 40 14Z" fill="url(#swirlGreen)" />
        </svg>
        <div className="w-[106px] whitespace-nowrap">
          <div className="text-[21px] leading-6 font-bold text-[#3d84c6]">极光下载站</div>
          <div className="font-['Liberation_Sans',sans-serif] text-base leading-4 font-bold text-[#3fb36b]">www.xz7.com</div>
        </div>
      </div>
    </div>
  );
};

export default App;
